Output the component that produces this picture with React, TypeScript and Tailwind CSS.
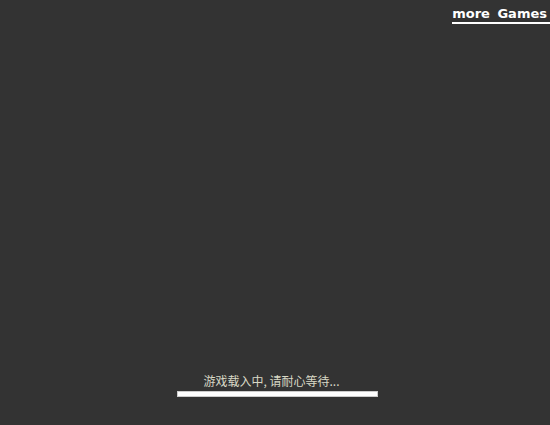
export default function App() {
  return (
    <div className="relative w-[550px] h-[425px] bg-[#333333] overflow-hidden" style={{ fontFamily: '"DejaVu Sans", "Noto Sans CJK SC", sans-serif' }}>
      <div className="flex justify-end pt-[6px]">
        <a className="text-white font-bold text-[13px] leading-[16px] pr-[3px] border-b-2 border-white" style={{ wordSpacing: "3px" }}>
          more Games
        </a>
      </div>
      <div className="absolute left-0 right-0 top-[373px] flex flex-col items-center">
        <div className="text-[12px] leading-[16px] text-[#d9d9c6] mr-[7px]" style={{ fontFamily: '"Noto Sans CJK SC", sans-serif' }}>
          游戏载入中, 请耐心等待...
        </div>
        <div className="mt-[2px] ml-[5px] w-[201px] h-[6px] bg-white border border-[#cccccc]" />
      </div>
    </div>
  );
}
